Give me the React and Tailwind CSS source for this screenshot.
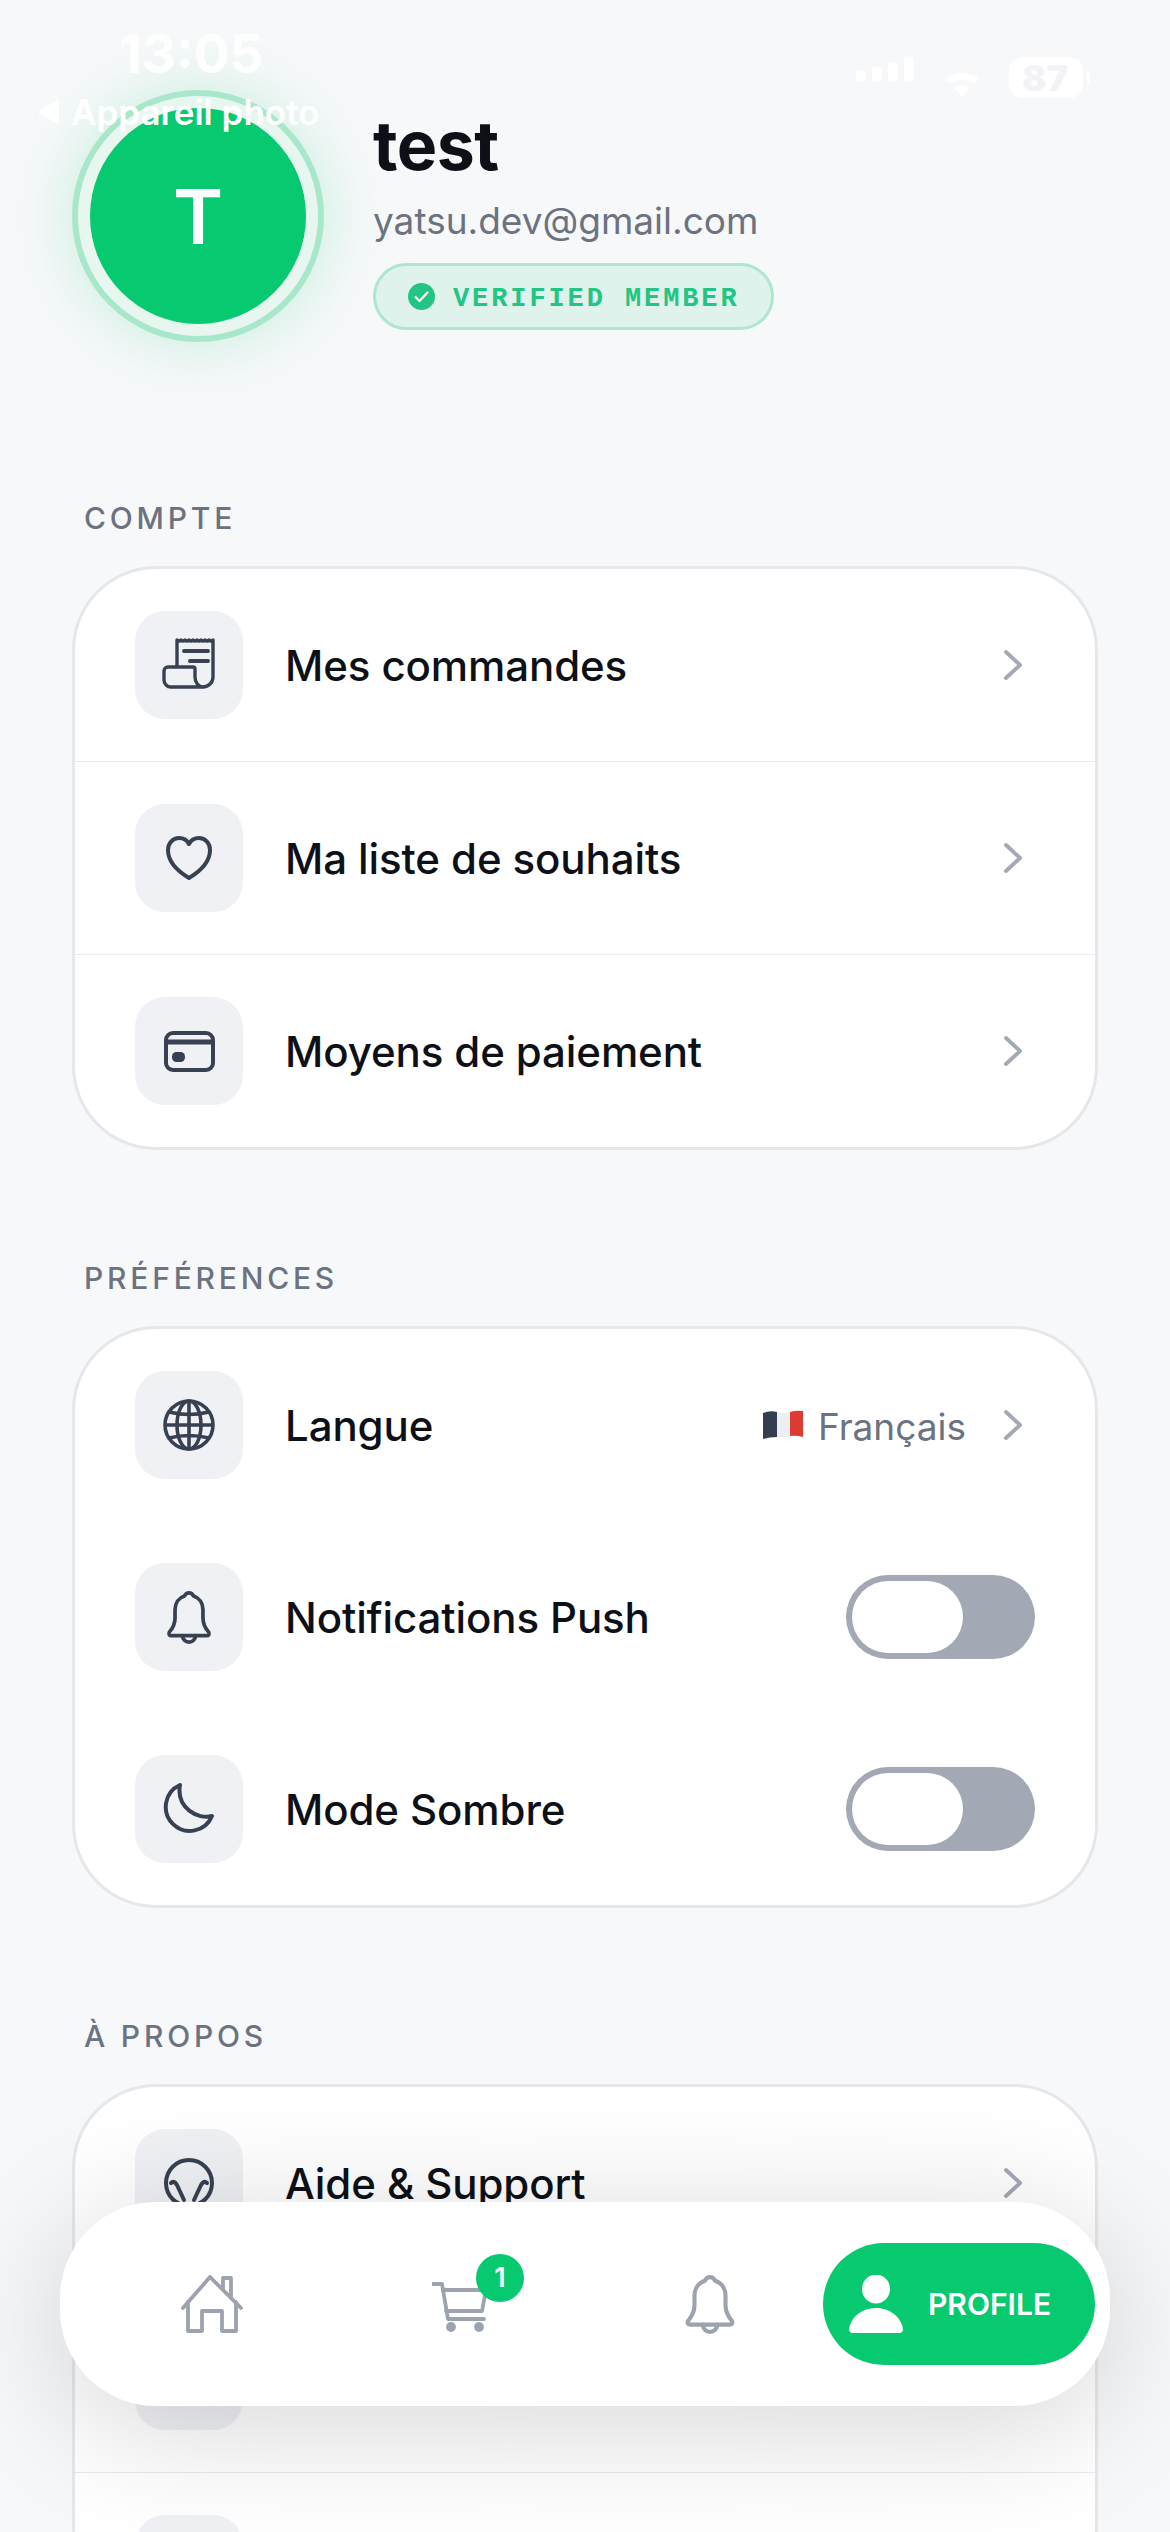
import React from "react";

const STROKE = "#374151";
const MUTED = "#9ca3af";

function Chevron() {
  return (
    <svg width="36" height="36" viewBox="0 0 36 36" fill="none" stroke="#a3a9b5" strokeWidth="4" strokeLinecap="round" strokeLinejoin="round" className="mr-[8px] shrink-0">
      <path d="M15 5 L29 18 L15 31" />
    </svg>
  );
}

function ReceiptIcon() {
  return (
    <svg width="72" height="72" viewBox="0 0 72 72" fill="none" stroke={STROKE} strokeWidth="4" strokeLinecap="round" strokeLinejoin="round">
      <path d="M24 38 V11 q2 2 4 0 q2 2 4 0 q2 2 4 0 q2 2 4 0 q2 2 4 0 q2 2 4 0 q2 2 4 0 q2 2 4 0 q2 2 4 0 V48 a10 10 0 0 1 -10 10 H18 a7 7 0 0 1 -7 -7 v-9 a4 4 0 0 1 4 -4 H40 a2 2 0 0 1 2 2 v8 a8 10 0 0 0 8 10" strokeWidth="3.4" />
      <path d="M31 22 H55 M37 32 H55" />
    </svg>
  );
}

function HeartIcon() {
  return (
    <svg width="50" height="46" viewBox="0 0 50 46" fill="none" stroke={STROKE} strokeWidth="4" strokeLinejoin="round">
      <path d="M25 43 C20 40 4 30 4 15 C4 8 9 3 15 3 C19 3 23 5 25 9 C27 5 31 3 35 3 C41 3 46 8 46 15 C46 30 30 40 25 43 Z" />
    </svg>
  );
}

function CardIcon() {
  return (
    <svg width="53" height="43" viewBox="0 0 53 43" fill="none" stroke={STROKE} strokeWidth="4">
      <rect x="3" y="3" width="47" height="37" rx="7" />
      <path d="M3 12 H50" strokeWidth="5" />
      <rect x="9" y="22" width="13" height="10" rx="4.5" fill={STROKE} stroke="none" />
    </svg>
  );
}

function GlobeIcon() {
  return (
    <svg width="54" height="54" viewBox="0 0 54 54" fill="none" stroke={STROKE} strokeWidth="3.6">
      <circle cx="27" cy="27" r="24" />
      <ellipse cx="27" cy="27" rx="12" ry="24" />
      <path d="M27 3 V51 M3 27 H51 M7 14 Q27 19 47 14 M7 40 Q27 35 47 40" />
    </svg>
  );
}

function BellIcon({ width, height, color }) {
  return (
    <svg width={width} height={height} viewBox="0 0 48 58" fill="none" stroke={color} strokeWidth="4" strokeLinejoin="round" strokeLinecap="round">
      <path d="M24 3 C26.5 3 28 4.5 29 6.5 C35 8.5 39 14 39 21 V30 C39 37 41.5 41 45 45 C46.5 47.5 45 49 43 49 H5 C3 49 1.5 47.5 3 45 C6.5 41 9 37 9 30 V21 C9 14 13 8.5 19 6.5 C20 4.5 21.5 3 24 3 Z" />
      <path d="M17 49 A7 7 0 0 0 31 49" />
    </svg>
  );
}

function MoonIcon() {
  return (
    <svg width="54" height="54" viewBox="0 0 54 54" fill="none" stroke={STROKE} strokeWidth="4" strokeLinejoin="round">
      <path d="M18 3 A24 24 0 1 0 50 34 C36 38 14 26 18 3 Z" />
    </svg>
  );
}

function SupportIcon() {
  return (
    <svg width="54" height="54" viewBox="0 0 54 54" fill="none" stroke={STROKE} strokeWidth="4" strokeLinecap="round" strokeLinejoin="round">
      <circle cx="27" cy="27" r="23" />
      <path d="M9 27 Q12 24 15 29 L22 44 M45 27 Q42 24 39 29 L32 44" />
    </svg>
  );
}

function HomeIcon() {
  return (
    <svg width="62" height="58" viewBox="0 0 62 58" fill="none" stroke={MUTED} strokeWidth="3.8" strokeLinecap="round" strokeLinejoin="round">
      <path d="M2 33 L29 2 L60 33" />
      <path d="M7 27 V56 H21 V36 H41 V56 H55 V27" />
      <path d="M42 14 V3 H50 V23" />
    </svg>
  );
}

function CartIcon() {
  return (
    <svg width="56" height="50" viewBox="0 0 56 50" fill="none" stroke={MUTED} strokeWidth="3.8" strokeLinecap="round" strokeLinejoin="round">
      <path d="M1 2 H10 L16 37 H52" />
      <path d="M11 8 H54 L50 29 H14" />
      <circle cx="19" cy="45" r="3" fill={MUTED} />
      <circle cx="47" cy="45" r="3" fill={MUTED} />
    </svg>
  );
}

function PersonIcon() {
  return (
    <svg width="54" height="58" viewBox="0 0 54 58" fill="#fff">
      <ellipse cx="27" cy="14" rx="14" ry="14.5" />
      <path d="M0 54 C2 42 13 33 27 33 C41 33 52 42 54 54 C54 57 52 58 50 58 H4 C2 58 0 57 0 54 Z" />
    </svg>
  );
}

function FlagIcon() {
  return (
    <svg width="40" height="30" viewBox="0 0 40 30">
      <path d="M0 3 Q7 0 14 2 V27 Q7 27 0 29 Z" fill="#333e50" />
      <path d="M14 2 Q20 4 27 2 V26 Q20 28 14 27 Z" fill="#eceef1" />
      <path d="M27 2 Q33 0 40 1 V27 Q33 25 27 26 Z" fill="#dc3b32" />
    </svg>
  );
}

function Toggle() {
  return (
    <div className="w-[189px] h-[84px] rounded-full bg-[#a2a8b4] p-[6px] shrink-0">
      <div className="w-[111px] h-[72px] rounded-full bg-white" />
    </div>
  );
}

function Row({ icon, label, divider, children }) {
  return (
    <div className={`h-[192px] box-content flex items-center px-[60px] ${divider ? "border-b border-[#e9ebef]" : ""}`}>
      <div className="w-[108px] h-[108px] rounded-[30px] bg-[#eff1f5] flex items-center justify-center shrink-0">{icon}</div>
      <span className="ml-[42px] flex-1 text-[42px] font-[450] tracking-[-0.1px] text-[#0d1117]">{label}</span>
      {children}
    </div>
  );
}

function Section({ title, children }) {
  return (
    <section className="mb-[110px]">
      <h2 className="ml-[12px] mb-[30px] h-[36px] leading-[36px] text-[30px] font-[550] tracking-[3.8px] text-[#6b7280]">{title}</h2>
      <div className="rounded-[84px] border-[3px] border-[#e5e7eb] bg-white overflow-hidden">{children}</div>
    </section>
  );
}

export default function App() {
  return (
    <div className="relative h-[2532px] overflow-hidden bg-[#f7f8fa] [font-family:Inter,sans-serif]">
      <main className="px-[72px] pt-[90px]">
        <header className="flex items-start h-[252px] mb-[158px]">
          <div className="w-[252px] h-[252px] rounded-full border-[6px] border-[#a9e7cb] bg-[#e8f6f0] p-[12px] shrink-0 shadow-[0_0_70px_rgba(7,201,111,0.2)]">
            <div className="w-full h-full rounded-full bg-[#07c96f] flex items-center justify-center text-white text-[76px] font-semibold">T</div>
          </div>
          <div className="ml-[49px] pt-[19px] flex flex-col items-start">
            <h1 className="text-[68px] leading-[72px] font-bold tracking-[-0.5px] text-[#0d1117]">test</h1>
            <p className="mt-[18px] text-[37px] leading-[44px] text-[#6b7280]">yatsu.dev@gmail.com</p>
            <div className="mt-[20px] w-[401px] h-[67px] rounded-full border-[3px] border-[#aee7cf] bg-[#e0f2ec] flex items-center pl-[32px]">
              <svg width="27" height="27" viewBox="0 0 27 27" className="shrink-0">
                <circle cx="13.5" cy="13.5" r="13.5" fill="#22c584" />
                <path d="M7.5 14 L11.5 18 L19.5 9.5" fill="none" stroke="#fff" strokeWidth="2.2" strokeLinecap="round" strokeLinejoin="round" />
              </svg>
              <span className="ml-[18px] mt-[5px] text-[27px] font-bold tracking-[2.9px] text-[#22c584] whitespace-nowrap [font-family:'Liberation_Mono',monospace]">VERIFIED MEMBER</span>
            </div>
          </div>
        </header>

        <Section title="COMPTE">
          <Row icon={<ReceiptIcon />} label="Mes commandes" divider><Chevron /></Row>
          <Row icon={<HeartIcon />} label="Ma liste de souhaits" divider><Chevron /></Row>
          <Row icon={<CardIcon />} label="Moyens de paiement"><Chevron /></Row>
        </Section>

        <Section title="PRÉFÉRENCES">
          <Row icon={<GlobeIcon />} label="Langue">
            <div className="flex items-center gap-[15px] mr-[25px]">
              <FlagIcon />
              <span className="mt-[3px] text-[37px] text-[#6b7280]">Français</span>
            </div>
            <Chevron />
          </Row>
          <Row icon={<BellIcon width={46} height={54} color={STROKE} />} label="Notifications Push"><Toggle /></Row>
          <Row icon={<MoonIcon />} label="Mode Sombre"><Toggle /></Row>
        </Section>

        <Section title="À PROPOS">
          <Row icon={<SupportIcon />} label="Aide & Support" divider><Chevron /></Row>
          <Row icon={<span />} label="" divider />
          <Row icon={<span />} label="" />
        </Section>
      </main>

      {/* Floating tab bar */}
      <nav className="absolute left-[60px] top-[2202px] w-[1050px] h-[204px] rounded-[96px] bg-white flex items-center pl-[121px] shadow-[0_20px_130px_rgba(0,0,0,0.17)]">
        <HomeIcon />
        <div className="relative ml-[189px] mt-[6px]">
          <CartIcon />
          <span className="absolute left-[44px] top-[-28px] w-[48px] h-[48px] rounded-full bg-[#07c96f] flex items-center justify-center text-white text-[27px] font-semibold">1</span>
        </div>
        <div className="ml-[197px]"><BellIcon width={50} height={60} color={MUTED} /></div>
        <div className="ml-[88px] w-[272px] h-[122px] rounded-full bg-[#07c96f] flex items-center pl-[26px]">
          <PersonIcon />
          <span className="ml-[25px] text-[30px] font-semibold text-white">PROFILE</span>
        </div>
      </nav>

      {/* System status bar drawn over the page */}
      <div className="absolute left-[119px] top-[24px] text-[53px] leading-[60px] font-bold text-white/90">13:05</div>
      <div className="absolute left-[38px] top-[90px] flex items-center text-white">
        <svg width="22" height="24" viewBox="0 0 22 24" fill="#fff"><path d="M20 1 V23 L1 12 Z" stroke="#fff" strokeLinejoin="round" strokeWidth="2" /></svg>
        <span className="ml-[11px] text-[35px] leading-[44px] font-semibold">Appareil photo</span>
      </div>
      <div className="absolute left-[856px] top-[57px] flex items-end gap-[6px]">
        <div className="w-[10px] h-[12px] rounded-[3px] bg-white" />
        <div className="w-[10px] h-[15px] rounded-[3px] bg-white" />
        <div className="w-[10px] h-[20px] rounded-[3px] bg-white" />
        <div className="w-[10px] h-[25px] rounded-[3px] bg-white" />
      </div>
      <svg className="absolute left-[944px] top-[71px]" width="36" height="27" viewBox="0 0 36 27" fill="#fff">
        <path d="M1 8 Q18 -5 35 8 L30 13 Q18 4 6 13 Z" />
        <path d="M10 17 Q18 11 26 17 L18 26 Z" />
      </svg>
      <div className="absolute left-[1009px] top-[57px] w-[74px] h-[41px] rounded-[14px] bg-white flex items-center pl-[13px] text-[36px] font-black text-[#f2f3f6]">87</div>
      <div className="absolute left-[1087px] top-[71px] w-[3px] h-[13px] rounded-r-[3px] bg-white" />
    </div>
  );
}
